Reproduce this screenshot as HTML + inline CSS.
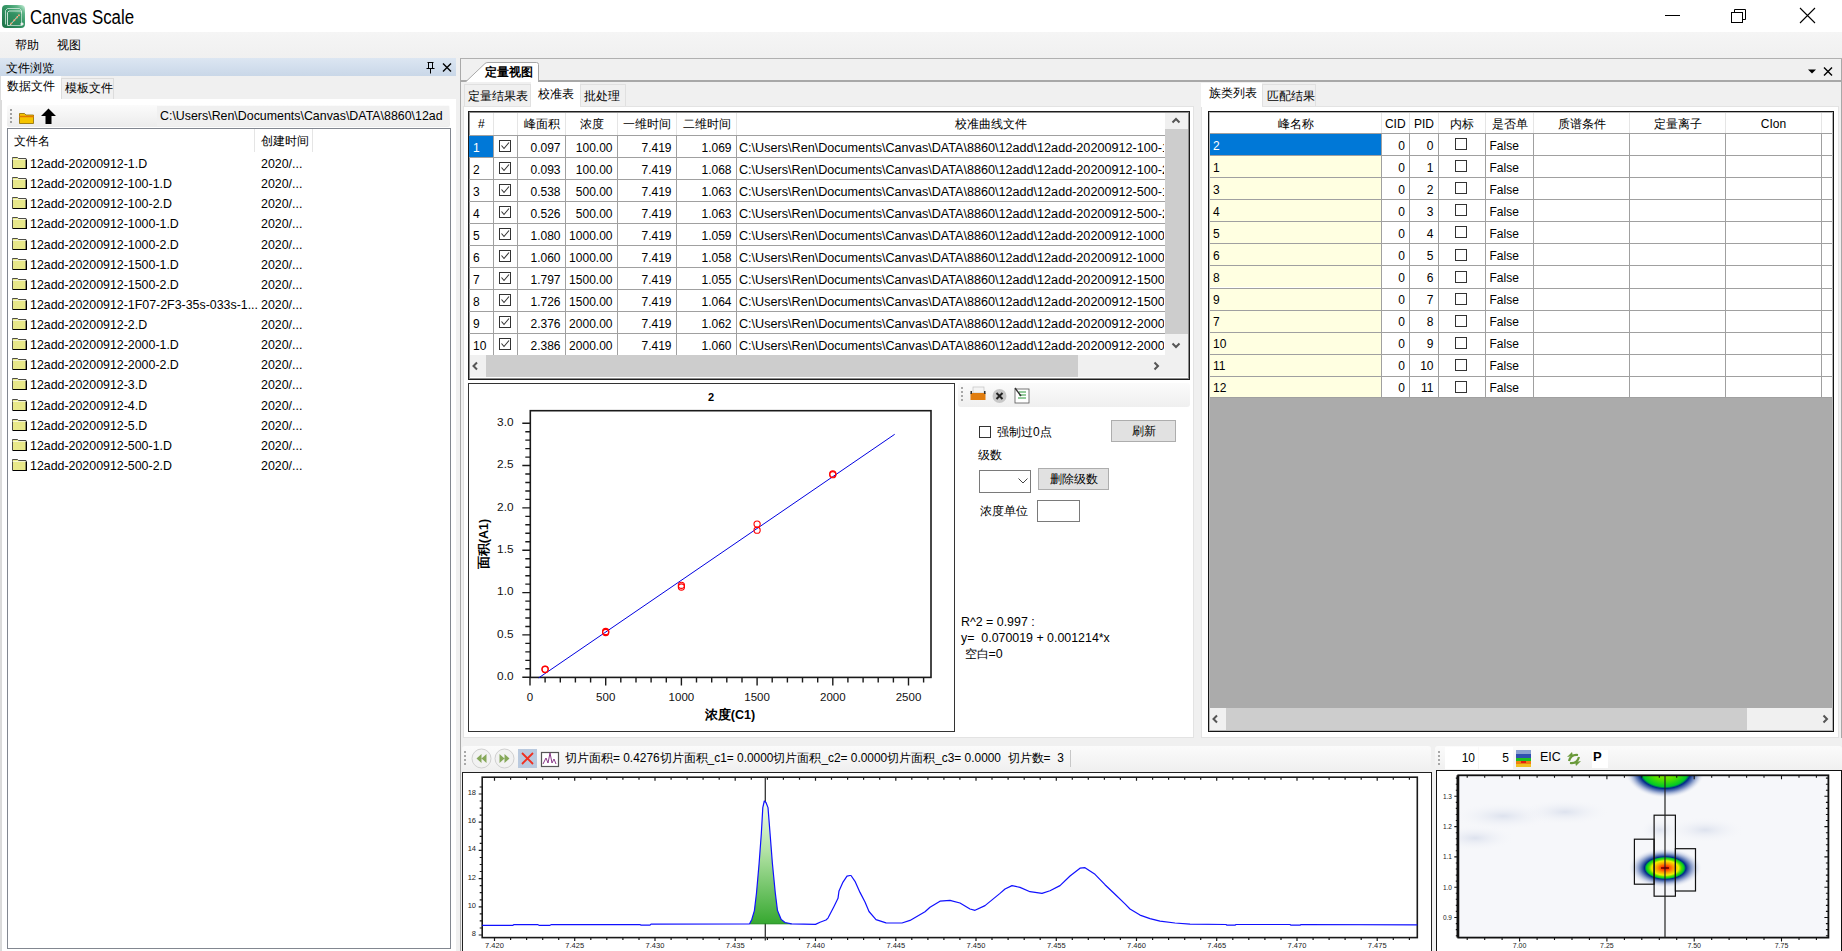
<!DOCTYPE html><html><head><meta charset="utf-8"><style>
html,body{margin:0;padding:0;width:1842px;height:951px;overflow:hidden;background:#f0f0f0;font-family:"Liberation Sans", sans-serif;font-size:12px;color:#000;}
div{box-sizing:border-box;}
.t{position:absolute;white-space:nowrap;line-height:14px;}
.cb{position:absolute;width:12px;height:12px;border:1px solid #333;background:#fff;}
</style></head><body>
<div style="position:absolute;left:0px;top:0px;width:1842px;height:32px;background:#fff;"></div>
<svg style="position:absolute;left:2px;top:5px" width="24" height="24" viewBox="0 0 24 24">
<defs><linearGradient id="ig" x1="0" y1="1" x2="1" y2="0"><stop offset="0" stop-color="#1b7046"/><stop offset="0.6" stop-color="#3a9a6a"/><stop offset="0.8" stop-color="#5fb488"/><stop offset="1" stop-color="#d2f5e0"/></linearGradient></defs>
<rect x="0" y="0" width="23" height="23" rx="4" fill="url(#ig)"/>
<path d="M3.5 19.5V5.5l2-2h12l2 2" fill="none" stroke="#d6eadf" stroke-width="1" opacity="0.8"/>
<path d="M5.5 20.5V7.5l1.5-1.5h12.5v14.5z" fill="none" stroke="#e4f2ea" stroke-width="1" opacity="0.85"/>
<rect x="7.5" y="8.5" width="12" height="12" fill="#2e8a5c" opacity="0.5"/>
<path d="M8 20L17 10" stroke="#c9e8d6" stroke-width="1"/>
<g fill="#f0a070"><circle cx="9.3" cy="18.6" r="1"/><circle cx="12.3" cy="15.3" r="1"/><circle cx="14.8" cy="12.6" r="1"/><circle cx="17" cy="10.3" r="1"/></g>
<path d="M18.5 19h3M20 17.5v3" stroke="#f4f4f4" stroke-width="1.4"/>
</svg>
<div class="t" style="left:30px;top:6.5px;font-size:19.5px;line-height:20px;transform:scaleX(0.865);transform-origin:0 0;">Canvas Scale</div>
<div style="position:absolute;left:1665px;top:15px;width:15px;height:1px;background:#000;"></div>
<svg style="position:absolute;left:1730px;top:8px" width="18" height="16" viewBox="0 0 18 16">
<rect x="1.5" y="4.5" width="11" height="10" fill="none" stroke="#000" stroke-width="1"/>
<path d="M4.5 4.5V1.5H15.5V11.5H12.5" fill="none" stroke="#000" stroke-width="1"/></svg>
<svg style="position:absolute;left:1799px;top:7px" width="17" height="17" viewBox="0 0 17 17">
<path d="M1 1L16 16M16 1L1 16" stroke="#000" stroke-width="1.1"/></svg>
<div style="position:absolute;left:0px;top:32px;width:1842px;height:26px;background:linear-gradient(#f5f5f5,#f0f0f0);"></div>
<div class="t" style="left:15px;top:38px;">帮助</div>
<div class="t" style="left:57px;top:38px;">视图</div>
<div style="position:absolute;left:0px;top:58px;width:456px;height:18px;background:linear-gradient(#dce6f2,#c9d7e8);"></div>
<div class="t" style="left:5.5px;top:60.5px;">文件浏览</div>
<svg style="position:absolute;left:425px;top:61px" width="30" height="13" viewBox="0 0 30 13">
<path d="M2.5 1.5h6M3.5 1.5v6M7.5 1.5v6M1.5 7.5h8M5.5 7.5v5" stroke="#000" stroke-width="1" fill="none"/>
<path d="M18 2.5L26 10.5M26 2.5L18 10.5" stroke="#000" stroke-width="1.4"/></svg>
<div style="position:absolute;left:0px;top:76px;width:456px;height:875px;background:#f0f0f0;"></div>
<div style="position:absolute;left:61px;top:78px;width:53px;height:22px;background:#f0f0f0;border:1px solid #dcdcdc;border-bottom:none;"></div>
<div class="t" style="left:65px;top:81px;">模板文件</div>
<div style="position:absolute;left:1px;top:99px;width:455px;height:852px;background:#fff;border-left:1px solid #dadada;"></div>
<div style="position:absolute;left:1px;top:76px;width:60px;height:24px;background:#fff;"></div>
<div class="t" style="left:7px;top:79px;">数据文件</div>
<div style="position:absolute;left:0px;top:76px;width:1px;height:875px;background:#dcdcdc;"></div>
<div style="position:absolute;left:7px;top:105px;width:443px;height:22px;background:linear-gradient(#fbfbfb,#ececec);border-radius:2px;"></div>
<svg style="position:absolute;left:9px;top:107px" width="50" height="20" viewBox="0 0 50 20">
<g fill="#a0a0a0"><rect x="1" y="2" width="2" height="2"/><rect x="1" y="6" width="2" height="2"/><rect x="1" y="10" width="2" height="2"/><rect x="1" y="14" width="2" height="2"/></g>
<path d="M10.5 6.5h5l1.5 1.5h7.5v8.5h-14z" fill="#f5c400" stroke="#8a6a00" stroke-width="0.8"/>
<path d="M10 9.5h15" stroke="#e07a00" stroke-width="1.5"/>
<path d="M39.5 1.5L32 9h4.5v8h6V9H47z" fill="#000"/>
</svg>
<div style="position:absolute;left:157px;top:106px;width:292px;height:20px;background:#f0f0f0;"></div>
<div class="t" style="left:160px;top:109px;font-size:12.4px;width:285px;overflow:hidden;">C:\Users\Ren\Documents\Canvas\DATA\8860\12ad</div>
<div style="position:absolute;left:7px;top:128px;width:444px;height:821px;background:#fff;border:1px solid #828790;"></div>
<div class="t" style="left:14px;top:134px;">文件名</div>
<div style="position:absolute;left:254px;top:129px;width:1px;height:23px;background:#e5e5e5;"></div>
<div style="position:absolute;left:312px;top:129px;width:1px;height:23px;background:#e5e5e5;"></div>
<div class="t" style="left:261px;top:134px;">创建时间</div>
<div style="position:absolute;left:12px;top:156.0px;width:15px;height:13px"><svg width="15" height="13" viewBox="0 0 15 13"><path d="M0.5 2.5V1.5h5l1 1h7.5v10h-13.5z" fill="#e8e88a" stroke="#3a3a3a" stroke-width="0.9"/><path d="M0.5 3.5h13.5" stroke="#fff" stroke-width="0.6"/><path d="M1 12.5h13.5v-9" stroke="#000" stroke-width="1.2" fill="none"/></svg></div>
<div class="t" style="left:30px;top:157px;font-size:12.4px;">12add-20200912-1.D</div>
<div class="t" style="left:261px;top:157px;font-size:12.4px;">2020/...</div>
<div style="position:absolute;left:12px;top:176.1px;width:15px;height:13px"><svg width="15" height="13" viewBox="0 0 15 13"><path d="M0.5 2.5V1.5h5l1 1h7.5v10h-13.5z" fill="#e8e88a" stroke="#3a3a3a" stroke-width="0.9"/><path d="M0.5 3.5h13.5" stroke="#fff" stroke-width="0.6"/><path d="M1 12.5h13.5v-9" stroke="#000" stroke-width="1.2" fill="none"/></svg></div>
<div class="t" style="left:30px;top:177px;font-size:12.4px;">12add-20200912-100-1.D</div>
<div class="t" style="left:261px;top:177px;font-size:12.4px;">2020/...</div>
<div style="position:absolute;left:12px;top:196.3px;width:15px;height:13px"><svg width="15" height="13" viewBox="0 0 15 13"><path d="M0.5 2.5V1.5h5l1 1h7.5v10h-13.5z" fill="#e8e88a" stroke="#3a3a3a" stroke-width="0.9"/><path d="M0.5 3.5h13.5" stroke="#fff" stroke-width="0.6"/><path d="M1 12.5h13.5v-9" stroke="#000" stroke-width="1.2" fill="none"/></svg></div>
<div class="t" style="left:30px;top:197px;font-size:12.4px;">12add-20200912-100-2.D</div>
<div class="t" style="left:261px;top:197px;font-size:12.4px;">2020/...</div>
<div style="position:absolute;left:12px;top:216.4px;width:15px;height:13px"><svg width="15" height="13" viewBox="0 0 15 13"><path d="M0.5 2.5V1.5h5l1 1h7.5v10h-13.5z" fill="#e8e88a" stroke="#3a3a3a" stroke-width="0.9"/><path d="M0.5 3.5h13.5" stroke="#fff" stroke-width="0.6"/><path d="M1 12.5h13.5v-9" stroke="#000" stroke-width="1.2" fill="none"/></svg></div>
<div class="t" style="left:30px;top:217px;font-size:12.4px;">12add-20200912-1000-1.D</div>
<div class="t" style="left:261px;top:217px;font-size:12.4px;">2020/...</div>
<div style="position:absolute;left:12px;top:236.5px;width:15px;height:13px"><svg width="15" height="13" viewBox="0 0 15 13"><path d="M0.5 2.5V1.5h5l1 1h7.5v10h-13.5z" fill="#e8e88a" stroke="#3a3a3a" stroke-width="0.9"/><path d="M0.5 3.5h13.5" stroke="#fff" stroke-width="0.6"/><path d="M1 12.5h13.5v-9" stroke="#000" stroke-width="1.2" fill="none"/></svg></div>
<div class="t" style="left:30px;top:238px;font-size:12.4px;">12add-20200912-1000-2.D</div>
<div class="t" style="left:261px;top:238px;font-size:12.4px;">2020/...</div>
<div style="position:absolute;left:12px;top:256.6px;width:15px;height:13px"><svg width="15" height="13" viewBox="0 0 15 13"><path d="M0.5 2.5V1.5h5l1 1h7.5v10h-13.5z" fill="#e8e88a" stroke="#3a3a3a" stroke-width="0.9"/><path d="M0.5 3.5h13.5" stroke="#fff" stroke-width="0.6"/><path d="M1 12.5h13.5v-9" stroke="#000" stroke-width="1.2" fill="none"/></svg></div>
<div class="t" style="left:30px;top:258px;font-size:12.4px;">12add-20200912-1500-1.D</div>
<div class="t" style="left:261px;top:258px;font-size:12.4px;">2020/...</div>
<div style="position:absolute;left:12px;top:276.8px;width:15px;height:13px"><svg width="15" height="13" viewBox="0 0 15 13"><path d="M0.5 2.5V1.5h5l1 1h7.5v10h-13.5z" fill="#e8e88a" stroke="#3a3a3a" stroke-width="0.9"/><path d="M0.5 3.5h13.5" stroke="#fff" stroke-width="0.6"/><path d="M1 12.5h13.5v-9" stroke="#000" stroke-width="1.2" fill="none"/></svg></div>
<div class="t" style="left:30px;top:278px;font-size:12.4px;">12add-20200912-1500-2.D</div>
<div class="t" style="left:261px;top:278px;font-size:12.4px;">2020/...</div>
<div style="position:absolute;left:12px;top:296.9px;width:15px;height:13px"><svg width="15" height="13" viewBox="0 0 15 13"><path d="M0.5 2.5V1.5h5l1 1h7.5v10h-13.5z" fill="#e8e88a" stroke="#3a3a3a" stroke-width="0.9"/><path d="M0.5 3.5h13.5" stroke="#fff" stroke-width="0.6"/><path d="M1 12.5h13.5v-9" stroke="#000" stroke-width="1.2" fill="none"/></svg></div>
<div class="t" style="left:30px;top:298px;font-size:12.4px;">12add-20200912-1F07-2F3-35s-033s-1...</div>
<div class="t" style="left:261px;top:298px;font-size:12.4px;">2020/...</div>
<div style="position:absolute;left:12px;top:317.0px;width:15px;height:13px"><svg width="15" height="13" viewBox="0 0 15 13"><path d="M0.5 2.5V1.5h5l1 1h7.5v10h-13.5z" fill="#e8e88a" stroke="#3a3a3a" stroke-width="0.9"/><path d="M0.5 3.5h13.5" stroke="#fff" stroke-width="0.6"/><path d="M1 12.5h13.5v-9" stroke="#000" stroke-width="1.2" fill="none"/></svg></div>
<div class="t" style="left:30px;top:318px;font-size:12.4px;">12add-20200912-2.D</div>
<div class="t" style="left:261px;top:318px;font-size:12.4px;">2020/...</div>
<div style="position:absolute;left:12px;top:337.2px;width:15px;height:13px"><svg width="15" height="13" viewBox="0 0 15 13"><path d="M0.5 2.5V1.5h5l1 1h7.5v10h-13.5z" fill="#e8e88a" stroke="#3a3a3a" stroke-width="0.9"/><path d="M0.5 3.5h13.5" stroke="#fff" stroke-width="0.6"/><path d="M1 12.5h13.5v-9" stroke="#000" stroke-width="1.2" fill="none"/></svg></div>
<div class="t" style="left:30px;top:338px;font-size:12.4px;">12add-20200912-2000-1.D</div>
<div class="t" style="left:261px;top:338px;font-size:12.4px;">2020/...</div>
<div style="position:absolute;left:12px;top:357.3px;width:15px;height:13px"><svg width="15" height="13" viewBox="0 0 15 13"><path d="M0.5 2.5V1.5h5l1 1h7.5v10h-13.5z" fill="#e8e88a" stroke="#3a3a3a" stroke-width="0.9"/><path d="M0.5 3.5h13.5" stroke="#fff" stroke-width="0.6"/><path d="M1 12.5h13.5v-9" stroke="#000" stroke-width="1.2" fill="none"/></svg></div>
<div class="t" style="left:30px;top:358px;font-size:12.4px;">12add-20200912-2000-2.D</div>
<div class="t" style="left:261px;top:358px;font-size:12.4px;">2020/...</div>
<div style="position:absolute;left:12px;top:377.4px;width:15px;height:13px"><svg width="15" height="13" viewBox="0 0 15 13"><path d="M0.5 2.5V1.5h5l1 1h7.5v10h-13.5z" fill="#e8e88a" stroke="#3a3a3a" stroke-width="0.9"/><path d="M0.5 3.5h13.5" stroke="#fff" stroke-width="0.6"/><path d="M1 12.5h13.5v-9" stroke="#000" stroke-width="1.2" fill="none"/></svg></div>
<div class="t" style="left:30px;top:378px;font-size:12.4px;">12add-20200912-3.D</div>
<div class="t" style="left:261px;top:378px;font-size:12.4px;">2020/...</div>
<div style="position:absolute;left:12px;top:397.6px;width:15px;height:13px"><svg width="15" height="13" viewBox="0 0 15 13"><path d="M0.5 2.5V1.5h5l1 1h7.5v10h-13.5z" fill="#e8e88a" stroke="#3a3a3a" stroke-width="0.9"/><path d="M0.5 3.5h13.5" stroke="#fff" stroke-width="0.6"/><path d="M1 12.5h13.5v-9" stroke="#000" stroke-width="1.2" fill="none"/></svg></div>
<div class="t" style="left:30px;top:399px;font-size:12.4px;">12add-20200912-4.D</div>
<div class="t" style="left:261px;top:399px;font-size:12.4px;">2020/...</div>
<div style="position:absolute;left:12px;top:417.7px;width:15px;height:13px"><svg width="15" height="13" viewBox="0 0 15 13"><path d="M0.5 2.5V1.5h5l1 1h7.5v10h-13.5z" fill="#e8e88a" stroke="#3a3a3a" stroke-width="0.9"/><path d="M0.5 3.5h13.5" stroke="#fff" stroke-width="0.6"/><path d="M1 12.5h13.5v-9" stroke="#000" stroke-width="1.2" fill="none"/></svg></div>
<div class="t" style="left:30px;top:419px;font-size:12.4px;">12add-20200912-5.D</div>
<div class="t" style="left:261px;top:419px;font-size:12.4px;">2020/...</div>
<div style="position:absolute;left:12px;top:437.8px;width:15px;height:13px"><svg width="15" height="13" viewBox="0 0 15 13"><path d="M0.5 2.5V1.5h5l1 1h7.5v10h-13.5z" fill="#e8e88a" stroke="#3a3a3a" stroke-width="0.9"/><path d="M0.5 3.5h13.5" stroke="#fff" stroke-width="0.6"/><path d="M1 12.5h13.5v-9" stroke="#000" stroke-width="1.2" fill="none"/></svg></div>
<div class="t" style="left:30px;top:439px;font-size:12.4px;">12add-20200912-500-1.D</div>
<div class="t" style="left:261px;top:439px;font-size:12.4px;">2020/...</div>
<div style="position:absolute;left:12px;top:457.9px;width:15px;height:13px"><svg width="15" height="13" viewBox="0 0 15 13"><path d="M0.5 2.5V1.5h5l1 1h7.5v10h-13.5z" fill="#e8e88a" stroke="#3a3a3a" stroke-width="0.9"/><path d="M0.5 3.5h13.5" stroke="#fff" stroke-width="0.6"/><path d="M1 12.5h13.5v-9" stroke="#000" stroke-width="1.2" fill="none"/></svg></div>
<div class="t" style="left:30px;top:459px;font-size:12.4px;">12add-20200912-500-2.D</div>
<div class="t" style="left:261px;top:459px;font-size:12.4px;">2020/...</div>
<div style="position:absolute;left:460px;top:58px;width:1382px;height:893px;background:#f0f0f0;border-left:1px solid #a9a9a9;border-top:1px solid #b0b0b0;"></div>
<div style="position:absolute;left:461px;top:80px;width:1381px;height:2px;background:#a8a8a8;"></div>
<svg style="position:absolute;left:464px;top:60.5px" width="78" height="22" viewBox="0 0 78 22">
<path d="M1 21.5L21 2.5Q22 1.5 24 1.5H72.5Q74.5 1.5 74.5 3.5V21.5" fill="#fff" stroke="#a8a8a8" stroke-width="1"/></svg>
<div class="t" style="left:485px;top:65px;"><b>定量视图</b></div>
<svg style="position:absolute;left:1805px;top:64px" width="30" height="14" viewBox="0 0 30 14">
<path d="M3 5.5h8l-4 4z" fill="#000"/><path d="M19 3.5L27 11.5M27 3.5L19 11.5" stroke="#000" stroke-width="1.4"/></svg>
<div style="position:absolute;left:462px;top:82px;width:732px;height:656px;background:#f0f0f0;"></div>
<div style="position:absolute;left:463px;top:106px;width:731px;height:632px;background:#fff;border:1px solid #e3e3e3;"></div>
<div style="position:absolute;left:464px;top:84px;width:67px;height:22px;background:#f0f0f0;border:1px solid #e0e0e0;border-bottom:none;"></div>
<div class="t" style="left:468px;top:88.5px;">定量结果表</div>
<div style="position:absolute;left:531px;top:82px;width:49px;height:25px;background:#fff;"></div>
<div class="t" style="left:538px;top:86.5px;">校准表</div>
<div style="position:absolute;left:580px;top:84px;width:46px;height:22px;background:#f0f0f0;border:1px solid #e0e0e0;border-bottom:none;"></div>
<div class="t" style="left:584px;top:88.5px;">批处理</div>
<div style="position:absolute;left:468px;top:111px;width:722px;height:269px;background:#fff;border:1px solid #1e1e1e;box-shadow:inset 0 0 0 1px #8c8c8c;"></div>
<div style="position:absolute;left:493.0px;top:113px;width:1px;height:22px;background:#e5e5e5;"></div>
<div style="position:absolute;left:517.0px;top:113px;width:1px;height:22px;background:#e5e5e5;"></div>
<div style="position:absolute;left:565.0px;top:113px;width:1px;height:22px;background:#e5e5e5;"></div>
<div style="position:absolute;left:617.0px;top:113px;width:1px;height:22px;background:#e5e5e5;"></div>
<div style="position:absolute;left:676.0px;top:113px;width:1px;height:22px;background:#e5e5e5;"></div>
<div style="position:absolute;left:736.0px;top:113px;width:1px;height:22px;background:#e5e5e5;"></div>
<div class="t" style="left:469.0px;top:117px;width:24.5px;text-align:center;">#</div>
<div class="t" style="left:493.5px;top:117px;width:24.0px;text-align:center;"></div>
<div class="t" style="left:517.5px;top:117px;width:48.0px;text-align:center;">峰面积</div>
<div class="t" style="left:565.5px;top:117px;width:52.0px;text-align:center;">浓度</div>
<div class="t" style="left:617.5px;top:117px;width:59.0px;text-align:center;">一维时间</div>
<div class="t" style="left:676.5px;top:117px;width:60.0px;text-align:center;">二维时间</div>
<div class="t" style="left:955px;top:117px;width:70px;text-align:center;">校准曲线文件</div>
<div style="position:absolute;left:469px;top:134.8px;width:696px;height:1px;background:#a0a0a0;"></div>
<div style="position:absolute;left:469px;top:135.8px;width:24.5px;height:21px;background:#0078d7;"></div>
<div class="t" style="left:473px;top:140.9px;color:#fff;">1</div>
<div class="cb" style="left:499px;top:139.8px;"></div>
<svg style="position:absolute;left:500px;top:140.8px" width="10" height="10" viewBox="0 0 10 10"><path d="M1.5 4.5L4 7.5L9 1.5" stroke="#333" stroke-width="1.1" fill="none"/></svg>
<div class="t" style="left:517.5px;top:140.9px;width:43.0px;text-align:right;">0.097</div>
<div class="t" style="left:565.5px;top:140.9px;width:47.0px;text-align:right;">100.00</div>
<div class="t" style="left:617.5px;top:140.9px;width:54.0px;text-align:right;">7.419</div>
<div class="t" style="left:676.5px;top:140.9px;width:55.0px;text-align:right;">1.069</div>
<div class="t" style="left:739px;top:140.9px;width:425px;overflow:hidden;font-size:12.62px;">C:\Users\Ren\Documents\Canvas\DATA\8860\12add\12add-20200912-100-11.D</div>
<div style="position:absolute;left:469px;top:156.8px;width:696px;height:1px;background:#a0a0a0;"></div>
<div class="t" style="left:473px;top:162.9px;">2</div>
<div class="cb" style="left:499px;top:161.8px;"></div>
<svg style="position:absolute;left:500px;top:162.8px" width="10" height="10" viewBox="0 0 10 10"><path d="M1.5 4.5L4 7.5L9 1.5" stroke="#333" stroke-width="1.1" fill="none"/></svg>
<div class="t" style="left:517.5px;top:162.9px;width:43.0px;text-align:right;">0.093</div>
<div class="t" style="left:565.5px;top:162.9px;width:47.0px;text-align:right;">100.00</div>
<div class="t" style="left:617.5px;top:162.9px;width:54.0px;text-align:right;">7.419</div>
<div class="t" style="left:676.5px;top:162.9px;width:55.0px;text-align:right;">1.068</div>
<div class="t" style="left:739px;top:162.9px;width:425px;overflow:hidden;font-size:12.62px;">C:\Users\Ren\Documents\Canvas\DATA\8860\12add\12add-20200912-100-21.D</div>
<div style="position:absolute;left:469px;top:178.8px;width:696px;height:1px;background:#a0a0a0;"></div>
<div class="t" style="left:473px;top:184.9px;">3</div>
<div class="cb" style="left:499px;top:183.8px;"></div>
<svg style="position:absolute;left:500px;top:184.8px" width="10" height="10" viewBox="0 0 10 10"><path d="M1.5 4.5L4 7.5L9 1.5" stroke="#333" stroke-width="1.1" fill="none"/></svg>
<div class="t" style="left:517.5px;top:184.9px;width:43.0px;text-align:right;">0.538</div>
<div class="t" style="left:565.5px;top:184.9px;width:47.0px;text-align:right;">500.00</div>
<div class="t" style="left:617.5px;top:184.9px;width:54.0px;text-align:right;">7.419</div>
<div class="t" style="left:676.5px;top:184.9px;width:55.0px;text-align:right;">1.063</div>
<div class="t" style="left:739px;top:184.9px;width:425px;overflow:hidden;font-size:12.62px;">C:\Users\Ren\Documents\Canvas\DATA\8860\12add\12add-20200912-500-11.D</div>
<div style="position:absolute;left:469px;top:200.8px;width:696px;height:1px;background:#a0a0a0;"></div>
<div class="t" style="left:473px;top:206.9px;">4</div>
<div class="cb" style="left:499px;top:205.8px;"></div>
<svg style="position:absolute;left:500px;top:206.8px" width="10" height="10" viewBox="0 0 10 10"><path d="M1.5 4.5L4 7.5L9 1.5" stroke="#333" stroke-width="1.1" fill="none"/></svg>
<div class="t" style="left:517.5px;top:206.9px;width:43.0px;text-align:right;">0.526</div>
<div class="t" style="left:565.5px;top:206.9px;width:47.0px;text-align:right;">500.00</div>
<div class="t" style="left:617.5px;top:206.9px;width:54.0px;text-align:right;">7.419</div>
<div class="t" style="left:676.5px;top:206.9px;width:55.0px;text-align:right;">1.063</div>
<div class="t" style="left:739px;top:206.9px;width:425px;overflow:hidden;font-size:12.62px;">C:\Users\Ren\Documents\Canvas\DATA\8860\12add\12add-20200912-500-21.D</div>
<div style="position:absolute;left:469px;top:222.8px;width:696px;height:1px;background:#a0a0a0;"></div>
<div class="t" style="left:473px;top:228.9px;">5</div>
<div class="cb" style="left:499px;top:227.8px;"></div>
<svg style="position:absolute;left:500px;top:228.8px" width="10" height="10" viewBox="0 0 10 10"><path d="M1.5 4.5L4 7.5L9 1.5" stroke="#333" stroke-width="1.1" fill="none"/></svg>
<div class="t" style="left:517.5px;top:228.9px;width:43.0px;text-align:right;">1.080</div>
<div class="t" style="left:565.5px;top:228.9px;width:47.0px;text-align:right;">1000.00</div>
<div class="t" style="left:617.5px;top:228.9px;width:54.0px;text-align:right;">7.419</div>
<div class="t" style="left:676.5px;top:228.9px;width:55.0px;text-align:right;">1.059</div>
<div class="t" style="left:739px;top:228.9px;width:425px;overflow:hidden;font-size:12.62px;">C:\Users\Ren\Documents\Canvas\DATA\8860\12add\12add-20200912-1000-1.D</div>
<div style="position:absolute;left:469px;top:244.8px;width:696px;height:1px;background:#a0a0a0;"></div>
<div class="t" style="left:473px;top:250.9px;">6</div>
<div class="cb" style="left:499px;top:249.8px;"></div>
<svg style="position:absolute;left:500px;top:250.8px" width="10" height="10" viewBox="0 0 10 10"><path d="M1.5 4.5L4 7.5L9 1.5" stroke="#333" stroke-width="1.1" fill="none"/></svg>
<div class="t" style="left:517.5px;top:250.9px;width:43.0px;text-align:right;">1.060</div>
<div class="t" style="left:565.5px;top:250.9px;width:47.0px;text-align:right;">1000.00</div>
<div class="t" style="left:617.5px;top:250.9px;width:54.0px;text-align:right;">7.419</div>
<div class="t" style="left:676.5px;top:250.9px;width:55.0px;text-align:right;">1.058</div>
<div class="t" style="left:739px;top:250.9px;width:425px;overflow:hidden;font-size:12.62px;">C:\Users\Ren\Documents\Canvas\DATA\8860\12add\12add-20200912-1000-1.D</div>
<div style="position:absolute;left:469px;top:266.8px;width:696px;height:1px;background:#a0a0a0;"></div>
<div class="t" style="left:473px;top:272.90000000000003px;">7</div>
<div class="cb" style="left:499px;top:271.8px;"></div>
<svg style="position:absolute;left:500px;top:272.8px" width="10" height="10" viewBox="0 0 10 10"><path d="M1.5 4.5L4 7.5L9 1.5" stroke="#333" stroke-width="1.1" fill="none"/></svg>
<div class="t" style="left:517.5px;top:272.9px;width:43.0px;text-align:right;">1.797</div>
<div class="t" style="left:565.5px;top:272.9px;width:47.0px;text-align:right;">1500.00</div>
<div class="t" style="left:617.5px;top:272.9px;width:54.0px;text-align:right;">7.419</div>
<div class="t" style="left:676.5px;top:272.9px;width:55.0px;text-align:right;">1.055</div>
<div class="t" style="left:739px;top:272.9px;width:425px;overflow:hidden;font-size:12.62px;">C:\Users\Ren\Documents\Canvas\DATA\8860\12add\12add-20200912-1500-1.D</div>
<div style="position:absolute;left:469px;top:288.8px;width:696px;height:1px;background:#a0a0a0;"></div>
<div class="t" style="left:473px;top:294.90000000000003px;">8</div>
<div class="cb" style="left:499px;top:293.8px;"></div>
<svg style="position:absolute;left:500px;top:294.8px" width="10" height="10" viewBox="0 0 10 10"><path d="M1.5 4.5L4 7.5L9 1.5" stroke="#333" stroke-width="1.1" fill="none"/></svg>
<div class="t" style="left:517.5px;top:294.9px;width:43.0px;text-align:right;">1.726</div>
<div class="t" style="left:565.5px;top:294.9px;width:47.0px;text-align:right;">1500.00</div>
<div class="t" style="left:617.5px;top:294.9px;width:54.0px;text-align:right;">7.419</div>
<div class="t" style="left:676.5px;top:294.9px;width:55.0px;text-align:right;">1.064</div>
<div class="t" style="left:739px;top:294.9px;width:425px;overflow:hidden;font-size:12.62px;">C:\Users\Ren\Documents\Canvas\DATA\8860\12add\12add-20200912-1500-1.D</div>
<div style="position:absolute;left:469px;top:310.8px;width:696px;height:1px;background:#a0a0a0;"></div>
<div class="t" style="left:473px;top:316.90000000000003px;">9</div>
<div class="cb" style="left:499px;top:315.8px;"></div>
<svg style="position:absolute;left:500px;top:316.8px" width="10" height="10" viewBox="0 0 10 10"><path d="M1.5 4.5L4 7.5L9 1.5" stroke="#333" stroke-width="1.1" fill="none"/></svg>
<div class="t" style="left:517.5px;top:316.9px;width:43.0px;text-align:right;">2.376</div>
<div class="t" style="left:565.5px;top:316.9px;width:47.0px;text-align:right;">2000.00</div>
<div class="t" style="left:617.5px;top:316.9px;width:54.0px;text-align:right;">7.419</div>
<div class="t" style="left:676.5px;top:316.9px;width:55.0px;text-align:right;">1.062</div>
<div class="t" style="left:739px;top:316.9px;width:425px;overflow:hidden;font-size:12.62px;">C:\Users\Ren\Documents\Canvas\DATA\8860\12add\12add-20200912-2000-1.D</div>
<div style="position:absolute;left:469px;top:332.8px;width:696px;height:1px;background:#a0a0a0;"></div>
<div class="t" style="left:473px;top:338.90000000000003px;">10</div>
<div class="cb" style="left:499px;top:337.8px;"></div>
<svg style="position:absolute;left:500px;top:338.8px" width="10" height="10" viewBox="0 0 10 10"><path d="M1.5 4.5L4 7.5L9 1.5" stroke="#333" stroke-width="1.1" fill="none"/></svg>
<div class="t" style="left:517.5px;top:338.9px;width:43.0px;text-align:right;">2.386</div>
<div class="t" style="left:565.5px;top:338.9px;width:47.0px;text-align:right;">2000.00</div>
<div class="t" style="left:617.5px;top:338.9px;width:54.0px;text-align:right;">7.419</div>
<div class="t" style="left:676.5px;top:338.9px;width:55.0px;text-align:right;">1.060</div>
<div class="t" style="left:739px;top:338.9px;width:425px;overflow:hidden;font-size:12.62px;">C:\Users\Ren\Documents\Canvas\DATA\8860\12add\12add-20200912-2000-1.D</div>
<div style="position:absolute;left:493.0px;top:135px;width:1px;height:219.5px;background:#a0a0a0;"></div>
<div style="position:absolute;left:517.0px;top:135px;width:1px;height:219.5px;background:#a0a0a0;"></div>
<div style="position:absolute;left:565.0px;top:135px;width:1px;height:219.5px;background:#a0a0a0;"></div>
<div style="position:absolute;left:617.0px;top:135px;width:1px;height:219.5px;background:#a0a0a0;"></div>
<div style="position:absolute;left:676.0px;top:135px;width:1px;height:219.5px;background:#a0a0a0;"></div>
<div style="position:absolute;left:736.0px;top:135px;width:1px;height:219.5px;background:#a0a0a0;"></div>
<div style="position:absolute;left:1165px;top:113px;width:23px;height:241.5px;background:#f0f0f0;"></div>
<div style="position:absolute;left:1165px;top:128.5px;width:23px;height:205px;background:#cdcdcd;"></div>
<svg style="position:absolute;left:1170px;top:116px" width="12" height="9" viewBox="0 0 12 9"><path d="M2.5 6.5L6 3L9.5 6.5" stroke="#555" stroke-width="2" fill="none"/></svg>
<svg style="position:absolute;left:1170px;top:341px" width="12" height="9" viewBox="0 0 12 9"><path d="M2.5 2.5L6 6L9.5 2.5" stroke="#555" stroke-width="2" fill="none"/></svg>
<div style="position:absolute;left:470px;top:354.5px;width:718px;height:22.5px;background:#f0f0f0;"></div>
<div style="position:absolute;left:486px;top:354.5px;width:592px;height:22.5px;background:#cdcdcd;"></div>
<svg style="position:absolute;left:471px;top:360px" width="10" height="12" viewBox="0 0 10 12"><path d="M6 2.5L2.5 6L6 9.5" stroke="#555" stroke-width="2" fill="none"/></svg>
<svg style="position:absolute;left:1151px;top:360px" width="10" height="12" viewBox="0 0 10 12"><path d="M3.5 2.5L7 6L3.5 9.5" stroke="#555" stroke-width="2" fill="none"/></svg>
<div style="position:absolute;left:468px;top:383px;width:487px;height:349px;background:#fff;border:1.5px solid #333;"></div>
<div style="position:absolute;left:958px;top:383px;width:232px;height:24px;background:linear-gradient(#fbfbfb,#efefef);border-radius:3px;"></div>
<svg style="position:absolute;left:960px;top:385px" width="75" height="20" viewBox="0 0 75 20">
<g fill="#a8a8a8"><rect x="1" y="2" width="2" height="2"/><rect x="1" y="6" width="2" height="2"/><rect x="1" y="10" width="2" height="2"/><rect x="1" y="14" width="2" height="2"/></g>
<rect x="13" y="2" width="11" height="6" fill="#f4f4f4" stroke="#bbb" stroke-width="0.6"/>
<rect x="10.5" y="8" width="15" height="7" fill="#e07d10"/><rect x="10.5" y="6" width="1.5" height="3" fill="#333"/><rect x="24" y="6" width="1.5" height="3" fill="#333"/>
<circle cx="39.5" cy="11" r="7" fill="#c8c8c8"/><path d="M36.5 8L42.5 14M42.5 8L36.5 14" stroke="#222" stroke-width="2"/>
<rect x="55" y="4" width="14" height="14" fill="#fff" stroke="#555" stroke-width="0.8"/>
<path d="M58 13h8M59 10h7M59 7h7" stroke="#2a9a3a" stroke-width="1.2"/><path d="M55 3L61 11" stroke="#333" stroke-width="1.4"/>
</svg>
<div class="cb" style="left:978.5px;top:425.5px;"></div>
<div class="t" style="left:997px;top:425px;">强制过0点</div>
<div style="position:absolute;left:1111px;top:420px;width:65px;height:22px;background:#e1e1e1;border:1px solid #adadad;"></div>
<div class="t" style="left:1111px;top:424px;width:65px;text-align:center;">刷新</div>
<div class="t" style="left:978px;top:448px;">级数</div>
<div style="position:absolute;left:978.5px;top:469.5px;width:52.5px;height:23px;background:#fff;border:1px solid #7a7a7a;"></div>
<svg style="position:absolute;left:1017px;top:477px" width="12" height="8" viewBox="0 0 12 8"><path d="M1.5 1.5L6 6L10.5 1.5" stroke="#444" stroke-width="1" fill="none"/></svg>
<div style="position:absolute;left:1038px;top:468px;width:71px;height:22px;background:#e1e1e1;border:1px solid #adadad;"></div>
<div class="t" style="left:1038px;top:472px;width:71px;text-align:center;">删除级数</div>
<div class="t" style="left:980px;top:504px;">浓度单位</div>
<div style="position:absolute;left:1037px;top:499.5px;width:43px;height:22px;background:#fff;border:1px solid #7a7a7a;"></div>
<div class="t" style="left:961px;top:615px;font-size:12.4px;">R^2 = 0.997 :</div>
<div class="t" style="left:961px;top:631px;font-size:12.4px;">y=&nbsp; 0.070019 + 0.001214*x</div>
<div class="t" style="left:964.5px;top:647px;font-size:12.4px;">空白=0</div>
<div style="position:absolute;left:1201px;top:82px;width:641px;height:656px;background:#f0f0f0;"></div>
<div style="position:absolute;left:1201px;top:106px;width:638px;height:632px;background:#fff;border:1px solid #e3e3e3;"></div>
<div style="position:absolute;left:1201px;top:83px;width:61px;height:24px;background:#fff;"></div>
<div class="t" style="left:1209px;top:86px;">族类列表</div>
<div style="position:absolute;left:1262px;top:84px;width:54px;height:22px;background:#f0f0f0;border:1px solid #e0e0e0;border-bottom:none;"></div>
<div class="t" style="left:1267px;top:89px;">匹配结果</div>
<div style="position:absolute;left:1208px;top:111px;width:626px;height:621px;background:#ababab;border:1px solid #141414;box-shadow:inset 0 0 0 1px #b4b4b4;"></div>
<div style="position:absolute;left:1210px;top:113px;width:622px;height:21px;background:#fff;"></div>
<div class="t" style="left:1210.0px;top:117px;width:171.0px;text-align:center;">峰名称</div>
<div class="t" style="left:1381.0px;top:117px;width:28.5px;text-align:center;">CID</div>
<div class="t" style="left:1409.5px;top:117px;width:29.0px;text-align:center;">PID</div>
<div class="t" style="left:1438.5px;top:117px;width:47.0px;text-align:center;">内标</div>
<div class="t" style="left:1485.5px;top:117px;width:48.0px;text-align:center;">是否单</div>
<div class="t" style="left:1533.5px;top:117px;width:96.0px;text-align:center;">质谱条件</div>
<div class="t" style="left:1629.5px;top:117px;width:96.0px;text-align:center;">定量离子</div>
<div class="t" style="left:1725.5px;top:117px;width:96.0px;text-align:center;">CIon</div>
<div class="t" style="left:1821.5px;top:117px;width:10.5px;text-align:center;"></div>
<div style="position:absolute;left:1380.5px;top:113px;width:1px;height:21px;background:#e5e5e5;"></div>
<div style="position:absolute;left:1409.0px;top:113px;width:1px;height:21px;background:#e5e5e5;"></div>
<div style="position:absolute;left:1438.0px;top:113px;width:1px;height:21px;background:#e5e5e5;"></div>
<div style="position:absolute;left:1485.0px;top:113px;width:1px;height:21px;background:#e5e5e5;"></div>
<div style="position:absolute;left:1533.0px;top:113px;width:1px;height:21px;background:#e5e5e5;"></div>
<div style="position:absolute;left:1629.0px;top:113px;width:1px;height:21px;background:#e5e5e5;"></div>
<div style="position:absolute;left:1725.0px;top:113px;width:1px;height:21px;background:#e5e5e5;"></div>
<div style="position:absolute;left:1821.0px;top:113px;width:1px;height:21px;background:#e5e5e5;"></div>
<div style="position:absolute;left:1210px;top:133.3px;width:622px;height:264px;background:#fff;"></div>
<div style="position:absolute;left:1210px;top:133.3px;width:622px;height:1px;background:#a0a0a0;"></div>
<div style="position:absolute;left:1210px;top:134.3px;width:170.5px;height:21px;background:#0078d7;"></div>
<div class="t" style="left:1213px;top:138.9px;color:#fff;">2</div>
<div class="t" style="left:1381px;top:138.9px;width:24px;text-align:right;">0</div>
<div class="t" style="left:1409.5px;top:138.9px;width:24px;text-align:right;">0</div>
<div class="cb" style="left:1455px;top:138.3px;"></div>
<div class="t" style="left:1489.5px;top:138.9px;">False</div>
<div style="position:absolute;left:1210px;top:155.33px;width:622px;height:1px;background:#a0a0a0;"></div>
<div style="position:absolute;left:1210px;top:156.33px;width:170.5px;height:21px;background:#ffffe1;"></div>
<div class="t" style="left:1213px;top:160.93px;">1</div>
<div class="t" style="left:1381px;top:160.93px;width:24px;text-align:right;">0</div>
<div class="t" style="left:1409.5px;top:160.93px;width:24px;text-align:right;">1</div>
<div class="cb" style="left:1455px;top:160.3px;"></div>
<div class="t" style="left:1489.5px;top:160.93px;">False</div>
<div style="position:absolute;left:1210px;top:177.36px;width:622px;height:1px;background:#a0a0a0;"></div>
<div style="position:absolute;left:1210px;top:178.36px;width:170.5px;height:21px;background:#ffffe1;"></div>
<div class="t" style="left:1213px;top:182.96px;">3</div>
<div class="t" style="left:1381px;top:182.96px;width:24px;text-align:right;">0</div>
<div class="t" style="left:1409.5px;top:182.96px;width:24px;text-align:right;">2</div>
<div class="cb" style="left:1455px;top:182.4px;"></div>
<div class="t" style="left:1489.5px;top:182.96px;">False</div>
<div style="position:absolute;left:1210px;top:199.39000000000001px;width:622px;height:1px;background:#a0a0a0;"></div>
<div style="position:absolute;left:1210px;top:200.39000000000001px;width:170.5px;height:21px;background:#ffffe1;"></div>
<div class="t" style="left:1213px;top:204.99px;">4</div>
<div class="t" style="left:1381px;top:204.99px;width:24px;text-align:right;">0</div>
<div class="t" style="left:1409.5px;top:204.99px;width:24px;text-align:right;">3</div>
<div class="cb" style="left:1455px;top:204.4px;"></div>
<div class="t" style="left:1489.5px;top:204.99px;">False</div>
<div style="position:absolute;left:1210px;top:221.42000000000002px;width:622px;height:1px;background:#a0a0a0;"></div>
<div style="position:absolute;left:1210px;top:222.42000000000002px;width:170.5px;height:21px;background:#ffffe1;"></div>
<div class="t" style="left:1213px;top:227.02px;">5</div>
<div class="t" style="left:1381px;top:227.02px;width:24px;text-align:right;">0</div>
<div class="t" style="left:1409.5px;top:227.02px;width:24px;text-align:right;">4</div>
<div class="cb" style="left:1455px;top:226.4px;"></div>
<div class="t" style="left:1489.5px;top:227.02px;">False</div>
<div style="position:absolute;left:1210px;top:243.45000000000002px;width:622px;height:1px;background:#a0a0a0;"></div>
<div style="position:absolute;left:1210px;top:244.45000000000002px;width:170.5px;height:21px;background:#ffffe1;"></div>
<div class="t" style="left:1213px;top:249.05px;">6</div>
<div class="t" style="left:1381px;top:249.05px;width:24px;text-align:right;">0</div>
<div class="t" style="left:1409.5px;top:249.05px;width:24px;text-align:right;">5</div>
<div class="cb" style="left:1455px;top:248.5px;"></div>
<div class="t" style="left:1489.5px;top:249.05px;">False</div>
<div style="position:absolute;left:1210px;top:265.48px;width:622px;height:1px;background:#a0a0a0;"></div>
<div style="position:absolute;left:1210px;top:266.48px;width:170.5px;height:21px;background:#ffffe1;"></div>
<div class="t" style="left:1213px;top:271.08000000000004px;">8</div>
<div class="t" style="left:1381px;top:271.08000000000004px;width:24px;text-align:right;">0</div>
<div class="t" style="left:1409.5px;top:271.08000000000004px;width:24px;text-align:right;">6</div>
<div class="cb" style="left:1455px;top:270.5px;"></div>
<div class="t" style="left:1489.5px;top:271.08000000000004px;">False</div>
<div style="position:absolute;left:1210px;top:287.51px;width:622px;height:1px;background:#a0a0a0;"></div>
<div style="position:absolute;left:1210px;top:288.51px;width:170.5px;height:21px;background:#ffffe1;"></div>
<div class="t" style="left:1213px;top:293.11px;">9</div>
<div class="t" style="left:1381px;top:293.11px;width:24px;text-align:right;">0</div>
<div class="t" style="left:1409.5px;top:293.11px;width:24px;text-align:right;">7</div>
<div class="cb" style="left:1455px;top:292.5px;"></div>
<div class="t" style="left:1489.5px;top:293.11px;">False</div>
<div style="position:absolute;left:1210px;top:309.54px;width:622px;height:1px;background:#a0a0a0;"></div>
<div style="position:absolute;left:1210px;top:310.54px;width:170.5px;height:21px;background:#ffffe1;"></div>
<div class="t" style="left:1213px;top:315.14000000000004px;">7</div>
<div class="t" style="left:1381px;top:315.14000000000004px;width:24px;text-align:right;">0</div>
<div class="t" style="left:1409.5px;top:315.14000000000004px;width:24px;text-align:right;">8</div>
<div class="cb" style="left:1455px;top:314.5px;"></div>
<div class="t" style="left:1489.5px;top:315.14000000000004px;">False</div>
<div style="position:absolute;left:1210px;top:331.57000000000005px;width:622px;height:1px;background:#a0a0a0;"></div>
<div style="position:absolute;left:1210px;top:332.57000000000005px;width:170.5px;height:21px;background:#ffffe1;"></div>
<div class="t" style="left:1213px;top:337.1700000000001px;">10</div>
<div class="t" style="left:1381px;top:337.1700000000001px;width:24px;text-align:right;">0</div>
<div class="t" style="left:1409.5px;top:337.1700000000001px;width:24px;text-align:right;">9</div>
<div class="cb" style="left:1455px;top:336.6px;"></div>
<div class="t" style="left:1489.5px;top:337.1700000000001px;">False</div>
<div style="position:absolute;left:1210px;top:353.6px;width:622px;height:1px;background:#a0a0a0;"></div>
<div style="position:absolute;left:1210px;top:354.6px;width:170.5px;height:21px;background:#ffffe1;"></div>
<div class="t" style="left:1213px;top:359.20000000000005px;">11</div>
<div class="t" style="left:1381px;top:359.20000000000005px;width:24px;text-align:right;">0</div>
<div class="t" style="left:1409.5px;top:359.20000000000005px;width:24px;text-align:right;">10</div>
<div class="cb" style="left:1455px;top:358.6px;"></div>
<div class="t" style="left:1489.5px;top:359.20000000000005px;">False</div>
<div style="position:absolute;left:1210px;top:375.63px;width:622px;height:1px;background:#a0a0a0;"></div>
<div style="position:absolute;left:1210px;top:376.63px;width:170.5px;height:21px;background:#ffffe1;"></div>
<div class="t" style="left:1213px;top:381.23px;">12</div>
<div class="t" style="left:1381px;top:381.23px;width:24px;text-align:right;">0</div>
<div class="t" style="left:1409.5px;top:381.23px;width:24px;text-align:right;">11</div>
<div class="cb" style="left:1455px;top:380.6px;"></div>
<div class="t" style="left:1489.5px;top:381.23px;">False</div>
<div style="position:absolute;left:1210px;top:397.3px;width:622px;height:1px;background:#a0a0a0;"></div>
<div style="position:absolute;left:1380.5px;top:133.3px;width:1px;height:264px;background:#a0a0a0;"></div>
<div style="position:absolute;left:1409.0px;top:133.3px;width:1px;height:264px;background:#a0a0a0;"></div>
<div style="position:absolute;left:1438.0px;top:133.3px;width:1px;height:264px;background:#a0a0a0;"></div>
<div style="position:absolute;left:1485.0px;top:133.3px;width:1px;height:264px;background:#a0a0a0;"></div>
<div style="position:absolute;left:1533.0px;top:133.3px;width:1px;height:264px;background:#a0a0a0;"></div>
<div style="position:absolute;left:1629.0px;top:133.3px;width:1px;height:264px;background:#a0a0a0;"></div>
<div style="position:absolute;left:1725.0px;top:133.3px;width:1px;height:264px;background:#a0a0a0;"></div>
<div style="position:absolute;left:1821.0px;top:133.3px;width:1px;height:264px;background:#a0a0a0;"></div>
<div style="position:absolute;left:1210px;top:707.5px;width:622px;height:22.5px;background:#f0f0f0;"></div>
<div style="position:absolute;left:1225.5px;top:707.5px;width:521px;height:22.5px;background:#cdcdcd;"></div>
<svg style="position:absolute;left:1211px;top:713px" width="10" height="12" viewBox="0 0 10 12"><path d="M6 2.5L2.5 6L6 9.5" stroke="#555" stroke-width="2" fill="none"/></svg>
<svg style="position:absolute;left:1820px;top:713px" width="10" height="12" viewBox="0 0 10 12"><path d="M3.5 2.5L7 6L3.5 9.5" stroke="#555" stroke-width="2" fill="none"/></svg>
<div style="position:absolute;left:1841px;top:59px;width:1px;height:680px;background:#a8a8a8;"></div>
<div style="position:absolute;left:461px;top:738px;width:1381px;height:213px;background:#f0f0f0;"></div>
<div style="position:absolute;left:462px;top:746px;width:969px;height:24px;background:linear-gradient(#fbfbfb,#f0f0f0);border-radius:3px;"></div>
<svg style="position:absolute;left:463px;top:748px" width="100" height="22" viewBox="0 0 100 22">
<g fill="#a8a8a8"><rect x="1" y="3" width="2" height="2"/><rect x="1" y="7" width="2" height="2"/><rect x="1" y="11" width="2" height="2"/><rect x="1" y="15" width="2" height="2"/></g>
<circle cx="18.5" cy="10.5" r="9.5" fill="#f2f2f2" stroke="#d0d0d0"/><path d="M23.5 6v9l-5-4.5zM18.5 6v9l-5-4.5z" fill="#86a85a"/>
<circle cx="41.5" cy="10.5" r="9.5" fill="#f2f2f2" stroke="#d0d0d0"/><path d="M36.5 6v9l5-4.5zM41.5 6v9l5-4.5z" fill="#86a85a"/>
<rect x="55" y="1" width="19" height="19" fill="#b9c9de"/><path d="M59 5L70 16M70 5L59 16" stroke="#f03020" stroke-width="1.8"/>
<rect x="78.5" y="4.5" width="17" height="14" fill="#fff" stroke="#555" stroke-width="1.2"/>
<path d="M80 16L83 10L85 15L87 5L89 15L91 11L93 16" stroke="#8a3a8a" stroke-width="1" fill="none"/>
</svg>
<div class="t" style="left:565px;top:751px;font-size:11.9px;">切片面积= 0.4276切片面积_c1= 0.0000切片面积_c2= 0.0000切片面积_c3= 0.0000&nbsp; 切片数=&nbsp; 3</div>
<div style="position:absolute;left:1070px;top:750px;width:1px;height:17px;background:#c8c8c8;"></div>
<div style="position:absolute;left:1435px;top:746px;width:407px;height:24px;background:linear-gradient(#fbfbfb,#f0f0f0);border-radius:3px;"></div>
<svg style="position:absolute;left:1437px;top:748px" width="20" height="22" viewBox="0 0 20 22">
<g fill="#a8a8a8"><rect x="1" y="3" width="2" height="2"/><rect x="1" y="7" width="2" height="2"/><rect x="1" y="11" width="2" height="2"/><rect x="1" y="15" width="2" height="2"/></g></svg>
<div style="position:absolute;left:1445px;top:747px;width:33px;height:22px;background:#fff;"></div>
<div class="t" style="left:1445px;top:751px;width:30px;text-align:right;">10</div>
<div style="position:absolute;left:1479px;top:747px;width:34px;height:22px;background:#fff;"></div>
<div class="t" style="left:1479px;top:751px;width:30px;text-align:right;">5</div>
<svg style="position:absolute;left:1515px;top:749px" width="100" height="20" viewBox="0 0 100 20">
<rect x="1" y="1" width="15" height="4" fill="#8aa0d0"/><rect x="1" y="5" width="15" height="4" fill="#3050b0"/>
<rect x="1" y="9" width="15" height="3" fill="#20c020"/><rect x="1" y="12" width="15" height="3" fill="#f08010"/><rect x="1" y="15" width="15" height="3" fill="#f0c020"/>
<rect x="6" y="12" width="5" height="2" fill="#e02010"/>
<path d="M52 8l5-5 1 4zM66 12l-5 5-1-4z" fill="#6a9a3a"/><path d="M54 12q2-7 9-6M64 8q-2 7-9 6" stroke="#6a9a3a" stroke-width="2.2" fill="none"/>
<rect x="77" y="1" width="16" height="18" fill="#fff"/>
</svg>
<div class="t" style="left:1540px;top:750px;font-size:12.5px;">EIC</div>
<div class="t" style="left:1593px;top:750px;font-size:13px;"><b>P</b></div>
<div style="position:absolute;left:461.5px;top:772px;width:970px;height:179px;background:#fff;border:1.5px solid #222;border-bottom:none;"></div>
<div style="position:absolute;left:1435.5px;top:770px;width:406.5px;height:181px;background:#fff;border:1.5px solid #111;border-bottom:none;border-right:1.5px solid #111;"></div>
<svg style="position:absolute;left:0;top:0" width="1842" height="951" viewBox="0 0 1842 951"><rect x="530.3" y="410.7" width="400.7" height="266.7" fill="none" stroke="#1a1a1a" stroke-width="1.6"/><path d="M522.3 677.3H530.3 M525.3 668.8H530.3 M525.3 660.4H530.3 M525.3 651.9H530.3 M525.3 643.4H530.3 M522.3 634.9H530.3 M525.3 626.5H530.3 M525.3 618.0H530.3 M525.3 609.5H530.3 M525.3 601.1H530.3 M522.3 592.6H530.3 M525.3 584.1H530.3 M525.3 575.7H530.3 M525.3 567.2H530.3 M525.3 558.7H530.3 M522.3 550.2H530.3 M525.3 541.8H530.3 M525.3 533.3H530.3 M525.3 524.8H530.3 M525.3 516.4H530.3 M522.3 507.9H530.3 M525.3 499.4H530.3 M525.3 491.0H530.3 M525.3 482.5H530.3 M525.3 474.0H530.3 M522.3 465.5H530.3 M525.3 457.1H530.3 M525.3 448.6H530.3 M525.3 440.1H530.3 M525.3 431.7H530.3 M522.3 423.2H530.3 M530.0 677.4V685.4 M545.1 677.4V682.4 M560.3 677.4V682.4 M575.4 677.4V682.4 M590.6 677.4V682.4 M605.7 677.4V685.4 M620.8 677.4V682.4 M636.0 677.4V682.4 M651.1 677.4V682.4 M666.3 677.4V682.4 M681.4 677.4V685.4 M696.5 677.4V682.4 M711.7 677.4V682.4 M726.8 677.4V682.4 M742.0 677.4V682.4 M757.1 677.4V685.4 M772.2 677.4V682.4 M787.4 677.4V682.4 M802.5 677.4V682.4 M817.7 677.4V682.4 M832.8 677.4V685.4 M847.9 677.4V682.4 M863.1 677.4V682.4 M878.2 677.4V682.4 M893.4 677.4V682.4 M908.5 677.4V685.4 M923.6 677.4V682.4" stroke="#1a1a1a" stroke-width="1.4" fill="none"/><text x="513.5" y="680.0" text-anchor="end" font-size="11.8" font-family="Liberation Sans" fill="#111">0.0</text><text x="513.5" y="637.6" text-anchor="end" font-size="11.8" font-family="Liberation Sans" fill="#111">0.5</text><text x="513.5" y="595.3" text-anchor="end" font-size="11.8" font-family="Liberation Sans" fill="#111">1.0</text><text x="513.5" y="553.0" text-anchor="end" font-size="11.8" font-family="Liberation Sans" fill="#111">1.5</text><text x="513.5" y="510.6" text-anchor="end" font-size="11.8" font-family="Liberation Sans" fill="#111">2.0</text><text x="513.5" y="468.2" text-anchor="end" font-size="11.8" font-family="Liberation Sans" fill="#111">2.5</text><text x="513.5" y="425.9" text-anchor="end" font-size="11.8" font-family="Liberation Sans" fill="#111">3.0</text><text x="530.0" y="701" text-anchor="middle" font-size="11.5" font-family="Liberation Sans" fill="#111">0</text><text x="605.7" y="701" text-anchor="middle" font-size="11.5" font-family="Liberation Sans" fill="#111">500</text><text x="681.4" y="701" text-anchor="middle" font-size="11.5" font-family="Liberation Sans" fill="#111">1000</text><text x="757.1" y="701" text-anchor="middle" font-size="11.5" font-family="Liberation Sans" fill="#111">1500</text><text x="832.8" y="701" text-anchor="middle" font-size="11.5" font-family="Liberation Sans" fill="#111">2000</text><text x="908.5" y="701" text-anchor="middle" font-size="11.5" font-family="Liberation Sans" fill="#111">2500</text><line x1="538.7" y1="677.9" x2="894.7" y2="434.3" stroke="#0000e0" stroke-width="1"/><circle cx="545.1" cy="669.1" r="3.1" fill="none" stroke="#ff0000" stroke-width="1.1"/><circle cx="545.1" cy="669.5" r="3.1" fill="none" stroke="#ff0000" stroke-width="1.1"/><circle cx="605.7" cy="631.5" r="3.1" fill="none" stroke="#ff0000" stroke-width="1.1"/><circle cx="605.7" cy="632.5" r="3.1" fill="none" stroke="#ff0000" stroke-width="1.1"/><circle cx="681.4" cy="585.3" r="3.1" fill="none" stroke="#ff0000" stroke-width="1.1"/><circle cx="681.4" cy="587.0" r="3.1" fill="none" stroke="#ff0000" stroke-width="1.1"/><circle cx="757.1" cy="524.1" r="3.1" fill="none" stroke="#ff0000" stroke-width="1.1"/><circle cx="757.1" cy="530.2" r="3.1" fill="none" stroke="#ff0000" stroke-width="1.1"/><circle cx="832.8" cy="474.7" r="3.1" fill="none" stroke="#ff0000" stroke-width="1.1"/><circle cx="832.8" cy="473.9" r="3.1" fill="none" stroke="#ff0000" stroke-width="1.1"/><text x="711" y="401" text-anchor="middle" font-size="11" font-weight="bold" font-family="Liberation Sans">2</text><text x="730" y="719" text-anchor="middle" font-size="12.5" font-weight="bold" font-family="Liberation Sans">浓度(C1)</text><text transform="translate(488,544) rotate(-90)" text-anchor="middle" font-size="12.5" font-weight="bold" font-family="Liberation Sans">面积(A1)</text><rect x="482.2" y="777.2" width="935.1" height="160.4" fill="none" stroke="#1a1a1a" stroke-width="1.6"/><path d="M494.5 937.6v3.5M494.5 777.2v3.5 M510.6 937.6v2.5M510.6 777.2v2.5 M526.6 937.6v2.5M526.6 777.2v2.5 M542.7 937.6v2.5M542.7 777.2v2.5 M558.7 937.6v2.5M558.7 777.2v2.5 M574.7 937.6v3.5M574.7 777.2v3.5 M590.8 937.6v2.5M590.8 777.2v2.5 M606.8 937.6v2.5M606.8 777.2v2.5 M622.9 937.6v2.5M622.9 777.2v2.5 M639.0 937.6v2.5M639.0 777.2v2.5 M655.0 937.6v3.5M655.0 777.2v3.5 M671.1 937.6v2.5M671.1 777.2v2.5 M687.1 937.6v2.5M687.1 777.2v2.5 M703.1 937.6v2.5M703.1 777.2v2.5 M719.2 937.6v2.5M719.2 777.2v2.5 M735.2 937.6v3.5M735.2 777.2v3.5 M751.3 937.6v2.5M751.3 777.2v2.5 M767.4 937.6v2.5M767.4 777.2v2.5 M783.4 937.6v2.5M783.4 777.2v2.5 M799.5 937.6v2.5M799.5 777.2v2.5 M815.5 937.6v3.5M815.5 777.2v3.5 M831.5 937.6v2.5M831.5 777.2v2.5 M847.6 937.6v2.5M847.6 777.2v2.5 M863.6 937.6v2.5M863.6 777.2v2.5 M879.7 937.6v2.5M879.7 777.2v2.5 M895.8 937.6v3.5M895.8 777.2v3.5 M911.8 937.6v2.5M911.8 777.2v2.5 M927.9 937.6v2.5M927.9 777.2v2.5 M943.9 937.6v2.5M943.9 777.2v2.5 M959.9 937.6v2.5M959.9 777.2v2.5 M976.0 937.6v3.5M976.0 777.2v3.5 M992.0 937.6v2.5M992.0 777.2v2.5 M1008.1 937.6v2.5M1008.1 777.2v2.5 M1024.2 937.6v2.5M1024.2 777.2v2.5 M1040.2 937.6v2.5M1040.2 777.2v2.5 M1056.3 937.6v3.5M1056.3 777.2v3.5 M1072.3 937.6v2.5M1072.3 777.2v2.5 M1088.3 937.6v2.5M1088.3 777.2v2.5 M1104.4 937.6v2.5M1104.4 777.2v2.5 M1120.4 937.6v2.5M1120.4 777.2v2.5 M1136.5 937.6v3.5M1136.5 777.2v3.5 M1152.6 937.6v2.5M1152.6 777.2v2.5 M1168.6 937.6v2.5M1168.6 777.2v2.5 M1184.7 937.6v2.5M1184.7 777.2v2.5 M1200.7 937.6v2.5M1200.7 777.2v2.5 M1216.7 937.6v3.5M1216.7 777.2v3.5 M1232.8 937.6v2.5M1232.8 777.2v2.5 M1248.8 937.6v2.5M1248.8 777.2v2.5 M1264.9 937.6v2.5M1264.9 777.2v2.5 M1281.0 937.6v2.5M1281.0 777.2v2.5 M1297.0 937.6v3.5M1297.0 777.2v3.5 M1313.1 937.6v2.5M1313.1 777.2v2.5 M1329.1 937.6v2.5M1329.1 777.2v2.5 M1345.1 937.6v2.5M1345.1 777.2v2.5 M1361.2 937.6v2.5M1361.2 777.2v2.5 M1377.2 937.6v3.5M1377.2 777.2v3.5 M1393.3 937.6v2.5M1393.3 777.2v2.5 M1409.4 937.6v2.5M1409.4 777.2v2.5 M478.7 935.0h3.5 M479.7 928.0h2.5 M479.7 920.9h2.5 M479.7 913.9h2.5 M478.7 906.8h3.5 M479.7 899.8h2.5 M479.7 892.7h2.5 M479.7 885.6h2.5 M478.7 878.6h3.5 M479.7 871.5h2.5 M479.7 864.5h2.5 M479.7 857.5h2.5 M478.7 850.4h3.5 M479.7 843.4h2.5 M479.7 836.3h2.5 M479.7 829.2h2.5 M478.7 822.2h3.5 M479.7 815.1h2.5 M479.7 808.1h2.5 M479.7 801.0h2.5 M478.7 794.0h3.5 M479.7 787.0h2.5" stroke="#1a1a1a" stroke-width="1.2" fill="none"/><text x="476" y="936.0" text-anchor="end" font-size="7.5" font-family="Liberation Sans" fill="#222">8</text><text x="476" y="907.8" text-anchor="end" font-size="7.5" font-family="Liberation Sans" fill="#222">10</text><text x="476" y="879.6" text-anchor="end" font-size="7.5" font-family="Liberation Sans" fill="#222">12</text><text x="476" y="851.4" text-anchor="end" font-size="7.5" font-family="Liberation Sans" fill="#222">14</text><text x="476" y="823.2" text-anchor="end" font-size="7.5" font-family="Liberation Sans" fill="#222">16</text><text x="476" y="795.0" text-anchor="end" font-size="7.5" font-family="Liberation Sans" fill="#222">18</text><text x="494.5" y="948" text-anchor="middle" font-size="7.5" font-family="Liberation Sans" fill="#222">7.420</text><text x="574.7" y="948" text-anchor="middle" font-size="7.5" font-family="Liberation Sans" fill="#222">7.425</text><text x="655.0" y="948" text-anchor="middle" font-size="7.5" font-family="Liberation Sans" fill="#222">7.430</text><text x="735.2" y="948" text-anchor="middle" font-size="7.5" font-family="Liberation Sans" fill="#222">7.435</text><text x="815.5" y="948" text-anchor="middle" font-size="7.5" font-family="Liberation Sans" fill="#222">7.440</text><text x="895.8" y="948" text-anchor="middle" font-size="7.5" font-family="Liberation Sans" fill="#222">7.445</text><text x="976.0" y="948" text-anchor="middle" font-size="7.5" font-family="Liberation Sans" fill="#222">7.450</text><text x="1056.3" y="948" text-anchor="middle" font-size="7.5" font-family="Liberation Sans" fill="#222">7.455</text><text x="1136.5" y="948" text-anchor="middle" font-size="7.5" font-family="Liberation Sans" fill="#222">7.460</text><text x="1216.7" y="948" text-anchor="middle" font-size="7.5" font-family="Liberation Sans" fill="#222">7.465</text><text x="1297.0" y="948" text-anchor="middle" font-size="7.5" font-family="Liberation Sans" fill="#222">7.470</text><text x="1377.2" y="948" text-anchor="middle" font-size="7.5" font-family="Liberation Sans" fill="#222">7.475</text><defs><linearGradient id="pg" x1="0" y1="0" x2="0" y2="1"><stop offset="0" stop-color="#f4fcef"/><stop offset="0.4" stop-color="#b4e3a6"/><stop offset="1" stop-color="#36a830"/></linearGradient></defs><line x1="765.3" y1="777.2" x2="765.3" y2="940.6" stroke="#333" stroke-width="1.3"/><path d="M749.6 923.8 L751.8 919.4 L754.4 910.6 L756.5 893.0 L759.1 863.5 L761.3 834.0 L762.8 807.6 L764.3 801.0 L766.0 802.5 L768.0 807.6 L770.1 834.0 L772.4 863.5 L775.3 893.0 L777.5 910.6 L781.2 919.4 L785.0 922.5 L791.5 923.8Z" fill="url(#pg)"/><path d="M750 923.8H791.5" stroke="#1a8a1a" stroke-width="1"/><path d="M482.2 925.3 L513.0 925.3 L514.0 924.6 L538.0 924.6 L539.0 925.4 L550.0 925.4 L551.0 924.6 L640.0 924.6 L641.0 925.2 L650.0 925.2 L651.0 924.2 L749.6 923.8 L751.8 919.4 L754.4 910.6 L756.5 893.0 L759.1 863.5 L761.3 834.0 L762.8 807.6 L764.3 801.0 L766.0 802.5 L768.0 807.6 L770.1 834.0 L772.4 863.5 L775.3 893.0 L777.5 910.6 L781.2 919.4 L785.0 922.5 L791.5 923.8 L815.5 924.4 L820.0 922.2 L826.0 920.0 L828.0 918.1 L834.0 906.4 L838.0 898.3 L839.0 890.9 L843.0 882.1 L847.0 876.2 L850.0 875.5 L851.0 875.5 L855.0 881.3 L860.0 892.4 L865.0 902.0 L869.0 911.5 L876.0 919.6 L886.0 922.9 L902.0 923.0 L910.0 920.4 L925.0 911.7 L930.0 907.3 L940.0 901.2 L950.0 900.4 L960.0 903.0 L970.0 909.0 L975.0 910.3 L985.0 905.6 L1000.0 893.4 L1005.0 889.0 L1012.0 885.6 L1020.0 887.4 L1030.0 891.7 L1042.0 893.4 L1050.0 890.8 L1060.0 885.6 L1070.0 876.0 L1080.0 868.2 L1085.0 867.7 L1095.0 874.3 L1105.0 884.7 L1115.0 894.3 L1125.0 903.9 L1130.0 909.0 L1140.0 915.1 L1150.0 918.6 L1160.0 921.2 L1175.0 923.0 L1190.0 924.2 L1226.0 924.5 L1227.0 925.2 L1235.0 925.2 L1236.0 924.5 L1290.0 924.5 L1291.0 925.2 L1300.0 925.2 L1301.0 924.5 L1417.3 924.8" stroke="#1010ff" stroke-width="1.2" fill="none" stroke-linejoin="round"/><defs><radialGradient id="blob" cx="0.5" cy="0.5" r="0.5"><stop offset="0" stop-color="#b00000"/><stop offset="0.08" stop-color="#ff3000"/><stop offset="0.22" stop-color="#ff9a00"/><stop offset="0.36" stop-color="#f2f000"/><stop offset="0.44" stop-color="#50e000"/><stop offset="0.51" stop-color="#00c828"/><stop offset="0.56" stop-color="#002a8a"/><stop offset="0.66" stop-color="#2a4f9e" stop-opacity="0.75"/><stop offset="0.82" stop-color="#7088c0" stop-opacity="0.3"/><stop offset="1" stop-color="#f6f7fa" stop-opacity="0"/></radialGradient><radialGradient id="blob2" cx="0.5" cy="0.5" r="0.5"><stop offset="0" stop-color="#b0f000"/><stop offset="0.35" stop-color="#50e000"/><stop offset="0.58" stop-color="#00c828"/><stop offset="0.65" stop-color="#002a8a"/><stop offset="0.76" stop-color="#2a4f9e" stop-opacity="0.7"/><stop offset="0.88" stop-color="#7088c0" stop-opacity="0.3"/><stop offset="1" stop-color="#f6f7fa" stop-opacity="0"/></radialGradient><radialGradient id="faint" cx="0.5" cy="0.5" r="0.5"><stop offset="0" stop-color="#dde2ee"/><stop offset="1" stop-color="#f6f7fa" stop-opacity="0"/></radialGradient><clipPath id="dclip"><rect x="1458.3" y="775.3" width="370.1" height="162.3"/></clipPath></defs><g clip-path="url(#dclip)"><rect x="1458.3" y="775.3" width="370.1" height="162.3" fill="#f6f7fa"/><ellipse cx="1503" cy="816" rx="50" ry="14" fill="url(#faint)"/><ellipse cx="1565" cy="812" rx="45" ry="13" fill="url(#faint)"/><ellipse cx="1705" cy="830" rx="40" ry="13" fill="url(#faint)"/><ellipse cx="1475" cy="838" rx="40" ry="13" fill="url(#faint)"/><ellipse cx="1660" cy="830" rx="20" ry="12" fill="url(#faint)"/><ellipse cx="1665" cy="771" rx="40" ry="27" fill="url(#blob2)"/><ellipse cx="1665.2" cy="868" rx="37" ry="20" fill="url(#blob)"/></g><rect x="1458.3" y="775.3" width="370.1" height="162.3" fill="none" stroke="#111" stroke-width="1.8"/><line x1="1457.8" y1="775.3" x2="1457.8" y2="937.6" stroke="#111" stroke-width="2.6"/><path d="M1467.2 937.6v2.5M1467.2 775.3v2.5 M1484.7 937.6v2.5M1484.7 775.3v2.5 M1502.1 937.6v2.5M1502.1 775.3v2.5 M1519.6 937.6v4M1519.6 775.3v4 M1537.1 937.6v2.5M1537.1 775.3v2.5 M1554.5 937.6v2.5M1554.5 775.3v2.5 M1572.0 937.6v2.5M1572.0 775.3v2.5 M1589.4 937.6v2.5M1589.4 775.3v2.5 M1606.9 937.6v4M1606.9 775.3v4 M1624.4 937.6v2.5M1624.4 775.3v2.5 M1641.8 937.6v2.5M1641.8 775.3v2.5 M1659.3 937.6v2.5M1659.3 775.3v2.5 M1676.7 937.6v2.5M1676.7 775.3v2.5 M1694.2 937.6v4M1694.2 775.3v4 M1711.7 937.6v2.5M1711.7 775.3v2.5 M1729.1 937.6v2.5M1729.1 775.3v2.5 M1746.6 937.6v2.5M1746.6 775.3v2.5 M1764.0 937.6v2.5M1764.0 775.3v2.5 M1781.5 937.6v4M1781.5 775.3v4 M1799.0 937.6v2.5M1799.0 775.3v2.5 M1816.4 937.6v2.5M1816.4 775.3v2.5 M1455.8 935.7h2.5M1828.4 935.7h-2.5 M1455.8 929.6h2.5M1828.4 929.6h-2.5 M1455.8 923.6h2.5M1828.4 923.6h-2.5 M1454.3 917.5h4M1828.4 917.5h-4 M1455.8 911.4h2.5M1828.4 911.4h-2.5 M1455.8 905.4h2.5M1828.4 905.4h-2.5 M1455.8 899.3h2.5M1828.4 899.3h-2.5 M1455.8 893.3h2.5M1828.4 893.3h-2.5 M1454.3 887.2h4M1828.4 887.2h-4 M1455.8 881.1h2.5M1828.4 881.1h-2.5 M1455.8 875.1h2.5M1828.4 875.1h-2.5 M1455.8 869.0h2.5M1828.4 869.0h-2.5 M1455.8 863.0h2.5M1828.4 863.0h-2.5 M1454.3 856.9h4M1828.4 856.9h-4 M1455.8 850.8h2.5M1828.4 850.8h-2.5 M1455.8 844.8h2.5M1828.4 844.8h-2.5 M1455.8 838.7h2.5M1828.4 838.7h-2.5 M1455.8 832.7h2.5M1828.4 832.7h-2.5 M1454.3 826.6h4M1828.4 826.6h-4 M1455.8 820.5h2.5M1828.4 820.5h-2.5 M1455.8 814.5h2.5M1828.4 814.5h-2.5 M1455.8 808.4h2.5M1828.4 808.4h-2.5 M1455.8 802.4h2.5M1828.4 802.4h-2.5 M1454.3 796.3h4M1828.4 796.3h-4 M1455.8 790.2h2.5M1828.4 790.2h-2.5 M1455.8 784.2h2.5M1828.4 784.2h-2.5 M1455.8 778.1h2.5M1828.4 778.1h-2.5" stroke="#111" stroke-width="1.1" fill="none"/><text x="1452" y="920.0" text-anchor="end" font-size="6.5" font-family="Liberation Sans" fill="#222">0.9</text><text x="1452" y="889.7" text-anchor="end" font-size="6.5" font-family="Liberation Sans" fill="#222">1.0</text><text x="1452" y="859.4" text-anchor="end" font-size="6.5" font-family="Liberation Sans" fill="#222">1.1</text><text x="1452" y="829.1" text-anchor="end" font-size="6.5" font-family="Liberation Sans" fill="#222">1.2</text><text x="1452" y="798.8" text-anchor="end" font-size="6.5" font-family="Liberation Sans" fill="#222">1.3</text><text x="1519.6" y="948" text-anchor="middle" font-size="7" font-family="Liberation Sans" fill="#222">7.00</text><text x="1606.9" y="948" text-anchor="middle" font-size="7" font-family="Liberation Sans" fill="#222">7.25</text><text x="1694.2" y="948" text-anchor="middle" font-size="7" font-family="Liberation Sans" fill="#222">7.50</text><text x="1781.5" y="948" text-anchor="middle" font-size="7" font-family="Liberation Sans" fill="#222">7.75</text><g fill="none" stroke="#111" stroke-width="1.2"><rect x="1634.4" y="839.2" width="19.7" height="45"/><rect x="1654.1" y="815.2" width="21.3" height="81"/><rect x="1675.4" y="848.7" width="20.1" height="42.3"/></g><line x1="1665" y1="775.3" x2="1665" y2="937.6" stroke="#222" stroke-width="1.2"/><path d="M1661 868h8" stroke="#600" stroke-width="1.5"/></svg>
</body></html>
